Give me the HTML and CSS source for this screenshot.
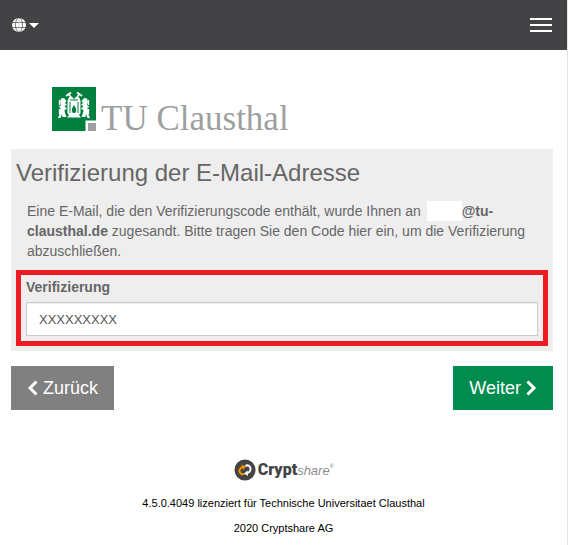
FILE: index.html
```html
<!DOCTYPE html>
<html lang="de">
<head>
<meta charset="utf-8">
<meta name="viewport" content="width=device-width, initial-scale=1">
<title>Verifizierung der E-Mail-Adresse</title>
<link rel="stylesheet" href="styles.css">
</head>
<body>
<header class="navbar">
  <button class="language" type="button" aria-label="Sprache">
    <svg class="globe" viewBox="0 0 14 14" aria-hidden="true">
      <circle cx="7" cy="7" r="7" fill="#fff"/>
      <g fill="none" stroke="#434345" stroke-width="0.7">
        <path d="M0 4.500H14M0 9.500H14"/>
        <ellipse cx="7" cy="7" rx="3.500" ry="7.300"/>
      </g>
      <path d="M7 0V14" stroke="#b0b0b2" stroke-width="0.5"/>
    </svg>
    <span class="caret"></span>
  </button>
  <button class="menu" type="button" aria-label="Menü">
    <span class="bar"></span>
    <span class="bar"></span>
    <span class="bar"></span>
  </button>
</header>

<main class="content">
  <div class="brand">
    <svg class="brand-mark" viewBox="0 0 44 44" aria-hidden="true">
      <path d="M0 0H44V44H0Z" fill="#00803e"/>
      <path d="M33.500 33.500H44V44H33.500Z" fill="#fff"/>
      <path d="M36 36H44V44H36Z" fill="#9d9fa1"/>
      <g fill="none" stroke="#fff">
        <path d="M16.500 7L20.500 12M27.500 7L23.500 12" stroke-width="1.500"/>
        <path d="M14 9L19 5.500M25 5.500L30 9" stroke-width="1.800"/>
      </g>
      <g fill="#fff">
        <path d="M9 11.500L12 11L14.500 14L13 16L15 18L12.500 19L15 22L12.500 23L13 26L14.500 30H10.500L10 27L8.500 31H6L8 26L7 24L9 21L6.500 20L9 18L8 15Z"/>
        <path d="M35 11.500L32 11L29.500 14L31 16L29 18L31.500 19L29 22L31.500 23L31 26L29.500 30H33.500L34 27L35.500 31H38L36 26L37 24L35 21L37.500 20L35 18L36 15Z"/>
        <path d="M17 10H20L22 12L24 10H27L28.500 14V26L27 28L29 30.500H15L17 28L15.500 26V14Z"/>
      </g>
      <path d="M7.500 13V18M7.500 22V27M36.500 13V18M36.500 22V27" fill="none" stroke="#fff" stroke-width="1.300"/>
      <path d="M18 15V26M26 15V26M18 13H26" fill="none" stroke="#00803e" stroke-width="1"/>
      <path d="M22 18C20 21 19.500 22 20 24.500C20.500 26.500 23.500 26.500 24 24.500C24.500 22 24 21 22 18Z" fill="#00803e"/>
    </svg>
    <span class="brand-name">TU Clausthal</span>
  </div>

  <form class="form">
    <section class="panel">
      <h1 class="title">Verifizierung der E-Mail-Adresse</h1>
      <p class="intro">Eine E-Mail, die den Verifizierungscode enthält, wurde Ihnen an <span class="redacted"></span><b>@tu-</b><b>clausthal.de</b> zugesandt. Bitte tragen Sie den Code hier ein, um die Verifizierung abzuschließen.</p>
      <div class="field">
        <label class="label" for="code">Verifizierung</label>
        <input class="input" id="code" type="text" value="XXXXXXXXX">
      </div>
    </section>
    <div class="actions">
      <button class="button back" type="button">
        <svg class="chevron" viewBox="0 0 11 16" aria-hidden="true"><path d="M9.500 1.500L3 8L9.500 14.500" fill="none" stroke="#fff" stroke-width="3"/></svg>
        <span>Zurück</span>
      </button>
      <button class="button next" type="submit">
        <span>Weiter</span>
        <svg class="chevron" viewBox="0 0 11 16" aria-hidden="true"><path d="M1.500 1.500L8 8L1.500 14.500" fill="none" stroke="#fff" stroke-width="3"/></svg>
      </button>
    </div>
  </form>
</main>

<footer class="footer">
  <div class="product">
    <svg class="product-mark" viewBox="0 0 22 22" aria-hidden="true">
      <circle cx="11" cy="11" r="10.500" fill="#434345"/>
      <path d="M10 8C7.500 7.500 5 10 5.500 12.500C6 15 8.500 16 10.500 14.500" fill="none" stroke="#f39200" stroke-width="2"/>
      <path d="M7.500 5.500L12 7.500L9 11Z" fill="#f39200"/>
      <path d="M11.500 7C13.500 5.500 16.500 7 16.500 9.500C17 12 15 14 12.500 14" fill="none" stroke="#fff" stroke-width="2"/>
      <path d="M13.500 11.500L10 14.500L14 17Z" fill="#fff"/>
    </svg>
    <span class="product-name"><b>Crypt</b><i>share</i></span><sup class="mark">®</sup>
  </div>
  <p class="line">4.5.0.4049 lizenziert für Technische Universitaet Clausthal</p>
  <p class="line">2020 Cryptshare AG</p>
</footer>
</body>
</html>
```
FILE: styles.css
```css
* {
  box-sizing: border-box;
}

body {
  margin: 0;
  min-height: 100vh;
  border-right: 1px solid #e5e5e5;
  background: #fff;
  color: #666;
  font: 14px/20px "Liberation Sans", Arial, sans-serif;
}

button,
input {
  margin: 0;
  border: 0;
  border-radius: 0;
  font: inherit;
}

.navbar {
  display: flex;
  align-items: center;
  justify-content: space-between;
  height: 50px;
  padding: 0 15px 0 12px;
  background: #434345;
}

.language {
  display: flex;
  align-items: center;
  gap: 3px;
  padding: 0;
  background: none;
}

.globe {
  width: 14px;
  height: 14px;
}

.caret {
  border: 5px solid transparent;
  border-top-color: #fff;
  border-bottom: 0;
}

.menu {
  display: flex;
  flex-direction: column;
  gap: 4px;
  padding: 0;
  background: none;
}

.bar {
  width: 22px;
  height: 2px;
  background: #fff;
}

.content {
  padding: 37px 14px 0 11px;
}

.brand {
  display: flex;
  align-items: flex-end;
  gap: 5px;
  height: 62px;
  padding: 0 41px 18px;
}

.brand-mark {
  flex: none;
  width: 44px;
  height: 44px;
}

.brand-name {
  color: #9d9fa1;
  font: 35px/24px "Liberation Serif", serif;
  white-space: nowrap;
}

.panel {
  padding: 10px 5px 5px;
  background: #eee;
}

.title {
  margin: 0 0 14px;
  font-size: 24px;
  font-weight: 400;
  line-height: 28px;
}

.intro {
  margin: 0 11px 9px;
}

.redacted {
  display: inline-block;
  width: 35px;
  height: 20px;
  margin-left: 2px;
  background: #fff;
  vertical-align: top;
}

.field {
  padding: 2px 5px 5px;
  border: 5px solid #ed1c24;
}

.label {
  display: block;
  margin-bottom: 5px;
  font-weight: 700;
}

.input {
  display: block;
  width: 100%;
  height: 34px;
  padding: 6px 12px;
  border: 1px solid #ccc;
  background: #fff;
  box-shadow: inset 0 1px 1px rgba(0, 0, 0, 0.075);
  color: #555;
  font-size: 13px;
}

.actions {
  display: flex;
  justify-content: space-between;
  padding-top: 15px;
}

.button {
  display: flex;
  align-items: center;
  gap: 5px;
  height: 44px;
  padding: 0 16px;
  color: #fff;
  font-size: 18px;
}

.back {
  background: #808080;
}

.next {
  background: #008c4f;
}

.chevron {
  width: 11px;
  height: 16px;
}

.footer {
  padding: 49px 0 8px;
  color: #000;
  font-size: 11px;
  line-height: 15px;
  text-align: center;
}

.product {
  display: flex;
  align-items: center;
  justify-content: center;
  height: 22px;
  margin-bottom: 15px;
}

.product-mark {
  width: 22px;
  height: 22px;
  margin-right: 2px;
}

.product-name {
  color: #434345;
  font-size: 16px;
}

.product-name b {
  font-family: Roboto, sans-serif;
  font-weight: 900;
}

.product-name i {
  color: #8c8d8f;
  font-family: "Liberation Sans Narrow", "Liberation Sans", sans-serif;
  font-size: 13px;
}

.mark {
  align-self: flex-start;
  color: #77787a;
  font-size: 5px;
}

.line {
  margin: 0 0 10px;
}
```
